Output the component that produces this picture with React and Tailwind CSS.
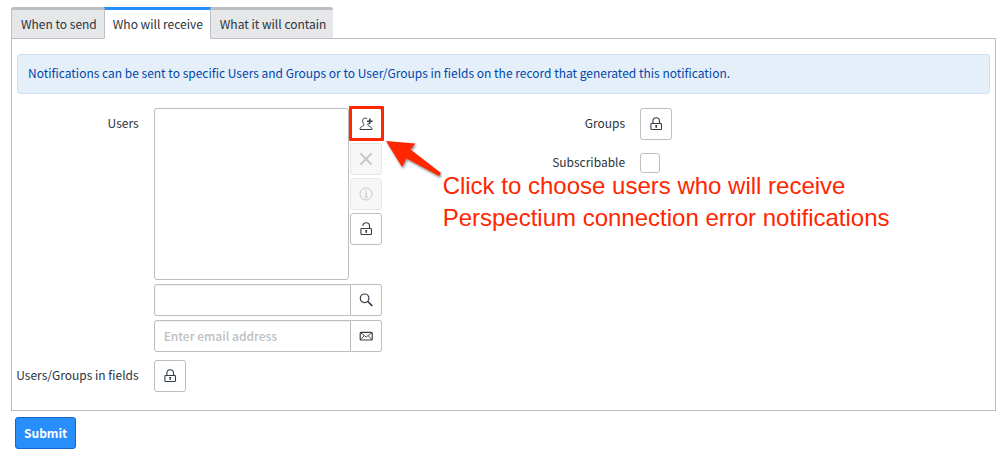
import { useState } from "react";

const iconProps = {
  width: 16,
  height: 16,
  viewBox: "0 0 16 16",
  fill: "none",
  stroke: "currentColor",
  strokeWidth: 1,
  "aria-hidden": true,
};

function UserAddIcon() {
  return (
    <svg {...iconProps}>
      <path d="M9.200 2.700C8.500 2.200 7.900 2 7.200 2.100C5.300 2.300 4.600 3.700 4.700 5.300C4.800 6.900 5.400 7.700 5.900 8.500C6.200 9.300 5.600 9.700 4.500 10.200C2.900 10.900 2 11.500 2 13.500H14C14 11.600 13.100 11 11.400 10.200C10.200 9.700 9.600 9.300 9.900 8.500C10.200 7.900 10.400 7.600 10.500 7" />
      <path d="M11.800 2.500V8.100M9 5.300H14.600" strokeWidth="1.500" />
    </svg>
  );
}

function CloseIcon() {
  return (
    <svg {...iconProps} strokeWidth={1.8}>
      <path d="M2.500 2.500L13.500 13.500M13.500 2.500L2.500 13.500" />
    </svg>
  );
}

function InfoIcon() {
  return (
    <svg {...iconProps}>
      <circle cx="8" cy="8" r="6" />
      <path d="M6.800 7H8.300V11M6.500 11.200H9.800" />
      <path d="M7.400 4.800H8.600" strokeWidth="1.300" />
    </svg>
  );
}

function LockIcon({ open = false }) {
  return (
    <svg {...iconProps} strokeWidth={1.1}>
      <rect x="2.900" y="7.500" width="10.600" height="6" rx="0.800" />
      <path
        d={
          open
            ? "M4.900 5V4.800C4.900 2.900 6.200 1.700 8.200 1.700S11.500 3 11.500 4.800V7.500"
            : "M4.900 7.500V5C4.900 3 6.200 1.700 8.200 1.700S11.500 3 11.500 5V7.500"
        }
      />
      <path d="M7.200 9.600H9.200M8.200 9.500V12" strokeWidth="1.300" />
    </svg>
  );
}

function SearchIcon() {
  return (
    <svg {...iconProps} strokeWidth={1.2}>
      <circle cx="6.600" cy="6.300" r="4.300" />
      <path d="M9.800 9.500L14.300 13.800" strokeWidth="1.700" />
    </svg>
  );
}

function MailIcon() {
  return (
    <svg {...iconProps} strokeWidth={1.2}>
      <rect x="2.200" y="4.300" width="12" height="7.700" rx="1" />
      <path d="M2.600 4.800L8.200 9L13.800 4.800M2.600 11.600L6.200 7.800M13.800 11.600L10.200 7.800" strokeWidth="0.900" />
    </svg>
  );
}

function IconButton({ label, disabled, children }) {
  return (
    <button
      type="button"
      aria-label={label}
      disabled={disabled}
      className="flex size-8 shrink-0 items-center justify-center rounded-[3px] border border-[#bcbec3] bg-white text-[#343d47] disabled:border-[#e6e7e9] disabled:bg-[#f7f7f8] disabled:text-[#c4c7cb]"
    >
      {children}
    </button>
  );
}

function Field({ label, htmlFor, children }) {
  return (
    <div className="flex items-start gap-[15px]">
      <label htmlFor={htmlFor} className="flex h-[30px] w-1/4 shrink-0 items-center justify-end whitespace-nowrap">
        {label}
      </label>
      {children}
    </div>
  );
}

function InputGroup({ id, label, type, placeholder, action, children }) {
  return (
    <div className="flex h-8 w-[228px]">
      <input
        id={id}
        type={type}
        aria-label={label}
        placeholder={placeholder}
        className="min-w-0 grow rounded-l-[3px] border border-[#bcbec3] bg-white px-[9px] shadow-[inset_0_1px_1px_rgba(0,0,0,0.06)] outline-none placeholder:font-medium placeholder:text-[#bcbfc4]"
      />
      <button
        type="button"
        aria-label={action}
        className="flex w-[31px] shrink-0 items-center justify-center rounded-r-[3px] border border-l-0 border-[#bcbec3] bg-white text-[#343d47]"
      >
        {children}
      </button>
    </div>
  );
}

function Callout() {
  return (
    <div className="pointer-events-none absolute -top-[2px] -left-px z-10">
      <div className="size-[35px] rounded-[1px] border-3 border-[#ff2600]" />
      <svg width="62" height="44" viewBox="0 0 62 44" className="absolute top-[33px] left-[35px] drop-shadow-[1px_2px_1px_rgba(0,0,0,0.4)]" aria-hidden="true">
        <path d="M2 2L31.500 4.500L26.500 10.500L57 34L55 37L22.500 19.500L18 28Z" fill="#ff2600" />
      </svg>
      <p className="absolute top-[64px] left-[94px] font-['Liberation_Sans',Arial,sans-serif] text-2xl leading-8 font-normal whitespace-nowrap text-[#ff2600]">
        Click to choose users who will receive
        <br />
        Perspectium connection error notifications
      </p>
    </div>
  );
}

const tabs = ["When to send", "Who will receive", "What it will contain"];

export default function App() {
  const [active, setActive] = useState(1);
  return (
    <form
      onSubmit={(e) => e.preventDefault()}
      className="bg-white pt-[7px] pr-[9px] pb-[6px] pl-[11px] font-['Noto_Sans_CJK_SC',sans-serif] text-xs leading-5 font-normal text-[#2b333c]"
    >
      <div role="tablist" className="relative z-10 -mb-px flex">
        {tabs.map((tab, i) => (
          <button
            key={tab}
            type="button"
            role="tab"
            aria-selected={i === active}
            onClick={() => setActive(i)}
            className="h-8 border-t-3 border-b border-l border-[#bcbec3] bg-[#e6e7e9] pr-[7px] pl-[9px] whitespace-nowrap first:rounded-tl-[3px] last:rounded-tr-[3px] aria-selected:border-t-[#278efc] aria-selected:border-r aria-selected:border-b-white aria-selected:bg-white aria-selected:pl-2 [&[aria-selected=true]+button]:border-l-0"
          >
            {tab}
          </button>
        ))}
      </div>

      <div className="border border-[#bcbec3] px-[5px] pt-[15px] pb-[18px]">
        <div className="rounded-[3px] border border-[#cce1f7] bg-[#e5effa] px-[10px] pt-2 pb-[10px] text-[#0046aa]">
          Notifications can be sent to specific Users and Groups or to User/Groups in fields on the record that generated this notification.
        </div>

        <div className="mt-[14px] grid grid-cols-2">
          <div className="flex flex-col gap-2">
            <Field label="Users" htmlFor="users">
              <div className="flex flex-col gap-1">
                <div className="flex gap-px">
                  <select
                    id="users"
                    multiple
                    className="h-[172px] w-[195px] rounded-[3px] border border-[#bcbec3] bg-white outline-none"
                  />
                  <div className="relative flex flex-col gap-[3px]">
                    <IconButton label="Choose users"><UserAddIcon /></IconButton>
                    <IconButton label="Remove selected user" disabled><CloseIcon /></IconButton>
                    <IconButton label="View selected user" disabled><InfoIcon /></IconButton>
                    <IconButton label="Lock users"><LockIcon open /></IconButton>
                    <Callout />
                  </div>
                </div>
                <InputGroup id="user-search" label="Find user" type="text" action="Look up user">
                  <SearchIcon />
                </InputGroup>
                <InputGroup id="email" label="Email address" type="email" placeholder="Enter email address" action="Add email address">
                  <MailIcon />
                </InputGroup>
              </div>
            </Field>
            <Field label="Users/Groups in fields">
              <IconButton label="Unlock users and groups in fields"><LockIcon /></IconButton>
            </Field>
          </div>

          <div className="flex flex-col gap-[7px]">
            <Field label="Groups">
              <IconButton label="Unlock groups"><LockIcon /></IconButton>
            </Field>
            <Field label="Subscribable" htmlFor="subscribable">
              <div className="flex h-8 items-center">
                <input
                  id="subscribable"
                  type="checkbox"
                  className="size-5 appearance-none rounded-[3px] border border-[#bcbec3] bg-white checked:bg-[#278efc]"
                />
              </div>
            </Field>
          </div>
        </div>
      </div>

      <button
        type="submit"
        className="mt-[6px] ml-1 h-8 rounded-[3px] border border-[#1366c9] bg-[#278efc] px-2 font-bold text-white"
      >
        Submit
      </button>
    </form>
  );
}
